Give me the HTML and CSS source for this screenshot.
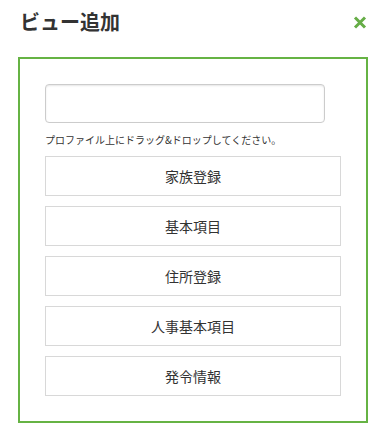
FILE: index.html
```html
<!DOCTYPE html>
<html lang="ja">

<head>
    <meta charset="UTF-8">
    <meta name="viewport" content="width=device-width, initial-scale=1.0">
    <title>ビュー追加</title>
    <link rel="stylesheet" href="styles.css">
</head>

<body>

    <div class="dialog">
        <div class="dialog-header">
            <h2>ビュー追加</h2>
            <button class="close-btn" type="button" aria-label="閉じる">
                <svg width="14" height="13" viewBox="0 0 14 13">
                    <path d="M2 1.5 L12 11.5 M12 1.5 L2 11.5" stroke="#66ad47" stroke-width="3" stroke-linecap="butt" fill="none" />
                </svg>
            </button>
        </div>

        <div class="view-box">
            <input type="text" class="view-name">
            <p class="hint">プロファイル上にドラッグ&amp;ドロップしてください。</p>

            <div class="view-list">
                <div class="view-item">家族登録</div>
                <div class="view-item">基本項目</div>
                <div class="view-item">住所登録</div>
                <div class="view-item">人事基本項目</div>
                <div class="view-item">発令情報</div>
            </div>
        </div>
    </div>

</body>

</html>
```

FILE: styles.css
```css
body {
    margin: 0;
    background: white;
    font-family: "Noto Sans CJK JP", "Noto Sans", sans-serif;
    color: #333;
}

.dialog {
    width: 350px;
    margin-left: 18px;
}

.dialog-header {
    display: flex;
    justify-content: space-between;
    align-items: center;
    padding-top: 8px;
    margin-bottom: 21px;
}

.dialog-header h2 {
    margin: 0 0 0 2px;
    font-size: 20px;
    line-height: 28px;
    font-weight: bold;
    color: #333;
}

.close-btn {
    border: none;
    background: none;
    padding: 0;
    margin-right: 1px;
    width: 14px;
    height: 13px;
    cursor: pointer;
}

.close-btn svg {
    display: block;
}

.view-box {
    border: 2px solid #66b344;
    padding: 25px;
}

.view-name {
    display: block;
    box-sizing: border-box;
    width: 280px;
    height: 39px;
    border: 1px solid #ccc;
    border-radius: 4px;
    box-shadow: inset 0 1px 2px rgba(0, 0, 0, 0.1);
    margin: 0;
}

.hint {
    margin: 10px 0 9px;
    font-size: 10px;
    line-height: 14px;
    color: #333;
}

.view-list {
    display: flex;
    flex-direction: column;
    gap: 10px;
}

.view-item {
    height: 38px;
    border: 1px solid #d8d8d8;
    display: flex;
    align-items: center;
    justify-content: center;
    font-size: 14px;
    color: #333;
}
```
